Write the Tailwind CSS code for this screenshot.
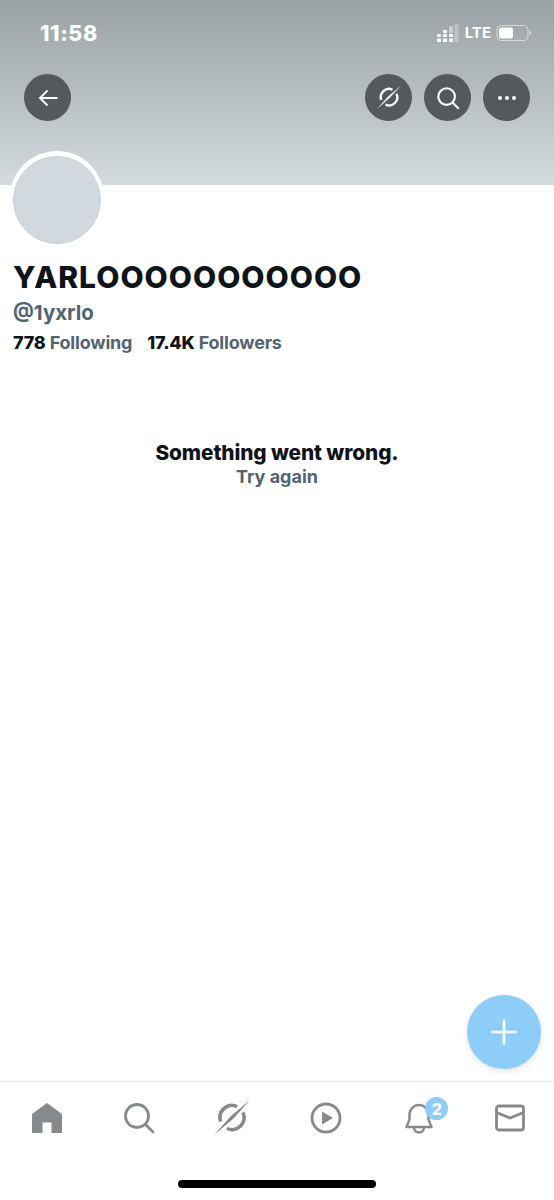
<!DOCTYPE html>
<html lang="en">
<head>
<meta charset="utf-8">
<script src="https://cdn.jsdelivr.net/npm/@tailwindcss/browser@4"></script>
<title>Profile</title>
</head>
<body class="m-0 bg-white">
<div class="relative flex h-[1200px] w-[554px] flex-col overflow-hidden bg-white font-['Inter','Liberation_Sans',sans-serif] text-[#0f1419]">

  <header class="h-[185px] shrink-0 bg-gradient-to-b from-[#99a1a4] to-[#d4dbdf] px-6 text-white">
    <div class="flex h-[74px] items-start justify-between">
      <span class="mt-[21px] pl-4 text-[21.5px] font-extrabold leading-6 tracking-[0.6px]">11:58</span>
      <div class="mt-6 mr-[-4px] flex items-center">
        <svg width="22" height="18" viewBox="0 0 22 18" fill="#fff">
          <rect x="0" y="10" width="4" height="3" rx=".8" opacity=".9"/><rect x="0" y="14.500" width="4" height="3.500" rx=".8"/>
          <rect x="6" y="6" width="4" height="3" rx=".8"/><rect x="6" y="10" width="4" height="3" rx=".8"/><rect x="6" y="14.500" width="4" height="3.500" rx=".8"/>
          <rect x="12" y="2" width="4" height="7" rx="1" opacity=".45"/><rect x="12" y="10" width="4" height="3" rx=".8"/><rect x="12" y="14.500" width="4" height="3.500" rx=".8"/>
          <rect x="17.500" y="0" width="4" height="18" rx="1" opacity=".3"/>
        </svg>
        <span class="ml-[6px] text-[15px] font-bold leading-[18px]">LTE</span>
        <svg width="38" height="18" viewBox="0 0 38 18" class="ml-[5px]">
          <rect x="1" y="1.500" width="31" height="15" rx="4.500" fill="none" stroke="#fff" stroke-opacity=".6" stroke-width="1"/>
          <rect x="3" y="3.500" width="14" height="11" rx="2.500" fill="#fff"/>
          <rect x="33.500" y="7" width="1.600" height="4" rx=".8" fill="#fff" fill-opacity=".6"/>
        </svg>
      </div>
    </div>
    <div class="flex items-center justify-between">
      <button class="flex h-[47px] w-[47px] items-center justify-center rounded-full bg-[#54595c]">
        <svg width="24" height="24" viewBox="0 0 24 24" fill="none" stroke="#fff" stroke-width="1.900"><path d="M21.500 12H4M11.500 4.500 4 12l7.500 7.500"/></svg>
      </button>
      <div class="flex gap-[12px]">
        <button class="flex h-[47px] w-[47px] items-center justify-center rounded-full bg-[#54595c]">
          <svg width="26" height="25" viewBox="0 0 38 36" fill="none"><path d="M24.100 6.600A12 12 0 0 0 7.700 21.600M29.900 12.400A12 12 0 0 1 13.900 28.400" stroke="#fff" stroke-width="3.400"/><path d="M37 0 20.500 18.500 1 35 17.500 16.500z" fill="#e6e8e9"/></svg>
        </button>
        <button class="flex h-[47px] w-[47px] items-center justify-center rounded-full bg-[#54595c]">
          <svg width="24" height="24" viewBox="0 0 26 26" fill="none" stroke="#fff" stroke-width="2.300"><circle cx="11.500" cy="11.500" r="9"/><path d="m18 18 6 6" stroke-linecap="round"/></svg>
        </button>
        <button class="flex h-[47px] w-[47px] items-center justify-center gap-[3px] rounded-full bg-[#54595c]">
          <span class="h-1 w-1 rounded-full bg-white"></span><span class="h-1 w-1 rounded-full bg-white"></span><span class="h-1 w-1 rounded-full bg-white"></span>
        </button>
      </div>
    </div>
  </header>

  <main class="relative flex-1 px-[13px]">
    <div class="ml-[-3px] mt-[-34px] h-[95px] w-[94px] rounded-full bg-white p-[3px] pt-[5px]">
      <div class="h-[88px] w-[88px] rounded-full border border-[#c9d2d7] bg-[#d1d9de]"></div>
    </div>
    <h1 class="mt-[13px] text-[30px] font-extrabold leading-[36px] tracking-[1px]">YARLOOOOOOOOOOO</h1>
    <p class="text-[20.5px] font-bold leading-[36px] text-[#536471]">@1yxrlo</p>
    <div class="mt-[1px] flex h-[22px] items-center text-[18px] font-bold leading-[22px] tracking-[-0.2px] text-[#536471]">
      <span class="mr-[15px]"><b class="font-extrabold text-[#0f1419]">778</b> Following</span>
      <span><b class="font-extrabold text-[#0f1419]">17.4K</b> Followers</span>
    </div>
    <div class="mt-[86px] text-center">
      <p class="text-[20.8px] font-extrabold leading-[25px] tracking-[-0.1px]">Something went wrong.</p>
      <p class="text-[18px] font-bold leading-[23px] text-[#536471]">Try again</p>
    </div>
  </main>

  <button class="absolute left-[467px] top-[995px] flex h-[74px] w-[74px] items-center justify-center rounded-full bg-[#8ecdf8] shadow-[0_2px_6px_rgba(0,0,0,0.12)]">
    <svg width="26" height="26" viewBox="0 0 26 26" stroke="#fff" stroke-width="2.600" stroke-linecap="round"><path d="M13 1.500v23M1.500 13h23"/></svg>
  </button>

  <nav class="h-[119px] shrink-0 border-t border-[#e7eaec]">
    <div class="grid h-[36px] grid-cols-6 items-center mt-[18px]">
      <div class="flex justify-center">
        <svg class="ml-[2px]" width="32" height="34" viewBox="0 0 32 34" fill="#868a8d"><path d="M16 2 31 13V31a1 1 0 0 1-1 1H20.500V21.500h-9V32H2a1 1 0 0 1-1-1V13z"/></svg>
      </div>
      <div class="flex justify-center">
        <svg class="ml-[2px]" width="32" height="32" viewBox="0 0 32 32" fill="none" stroke="#868a8d" stroke-width="2.800"><circle cx="14" cy="14" r="11.500"/><path d="m22.500 22.500 7.500 7.500" stroke-linecap="round"/></svg>
      </div>
      <div class="flex justify-center">
        <svg class="ml-[3px]" width="38" height="36" viewBox="0 0 38 36" fill="none"><path d="M24.100 6.600A12 12 0 0 0 7.700 21.600M29.900 12.400A12 12 0 0 1 13.900 28.400" stroke="#868a8d" stroke-width="3.600"/><path d="M37 0 20.500 18.500 1 35 17.500 16.500z" fill="#868a8d"/></svg>
      </div>
      <div class="flex justify-center">
        <svg class="ml-[6px]" width="32" height="32" viewBox="0 0 32 32" fill="none"><circle cx="16" cy="16" r="14" stroke="#868a8d" stroke-width="2.800"/><path d="M12 9.500v13l11-6.500z" fill="#868a8d"/></svg>
      </div>
      <div class="relative flex justify-center">
        <svg class="ml-[7px]" width="28" height="32" viewBox="0 0 28 32" fill="none" stroke="#868a8d" stroke-width="2.400"><path d="M1.500 25h25l-3-7.500V12.500a9.500 9.500 0 0 0-19 0v5z" stroke-linejoin="round"/><path d="M9 25.500a5 5 0 0 0 10 0"/></svg>
        <span class="absolute left-[56px] top-[-5px] flex h-[23px] w-[23px] items-center justify-center rounded-full bg-[#8ecdf8] text-[16px] font-extrabold leading-none text-white">2</span>
      </div>
      <div class="flex justify-center">
        <svg class="ml-[4px]" width="32" height="30" viewBox="0 0 32 30" fill="none" stroke="#868a8d" stroke-width="2.800"><rect x="2.500" y="3" width="27" height="24" rx="2.500"/><path d="M2.500 9.500 16 15 29.500 9.500"/></svg>
      </div>
    </div>
  </nav>

  <div class="absolute bottom-[12px] left-[178px] h-2 w-[198px] rounded-full bg-black"></div>
</div>
</body>
</html>
